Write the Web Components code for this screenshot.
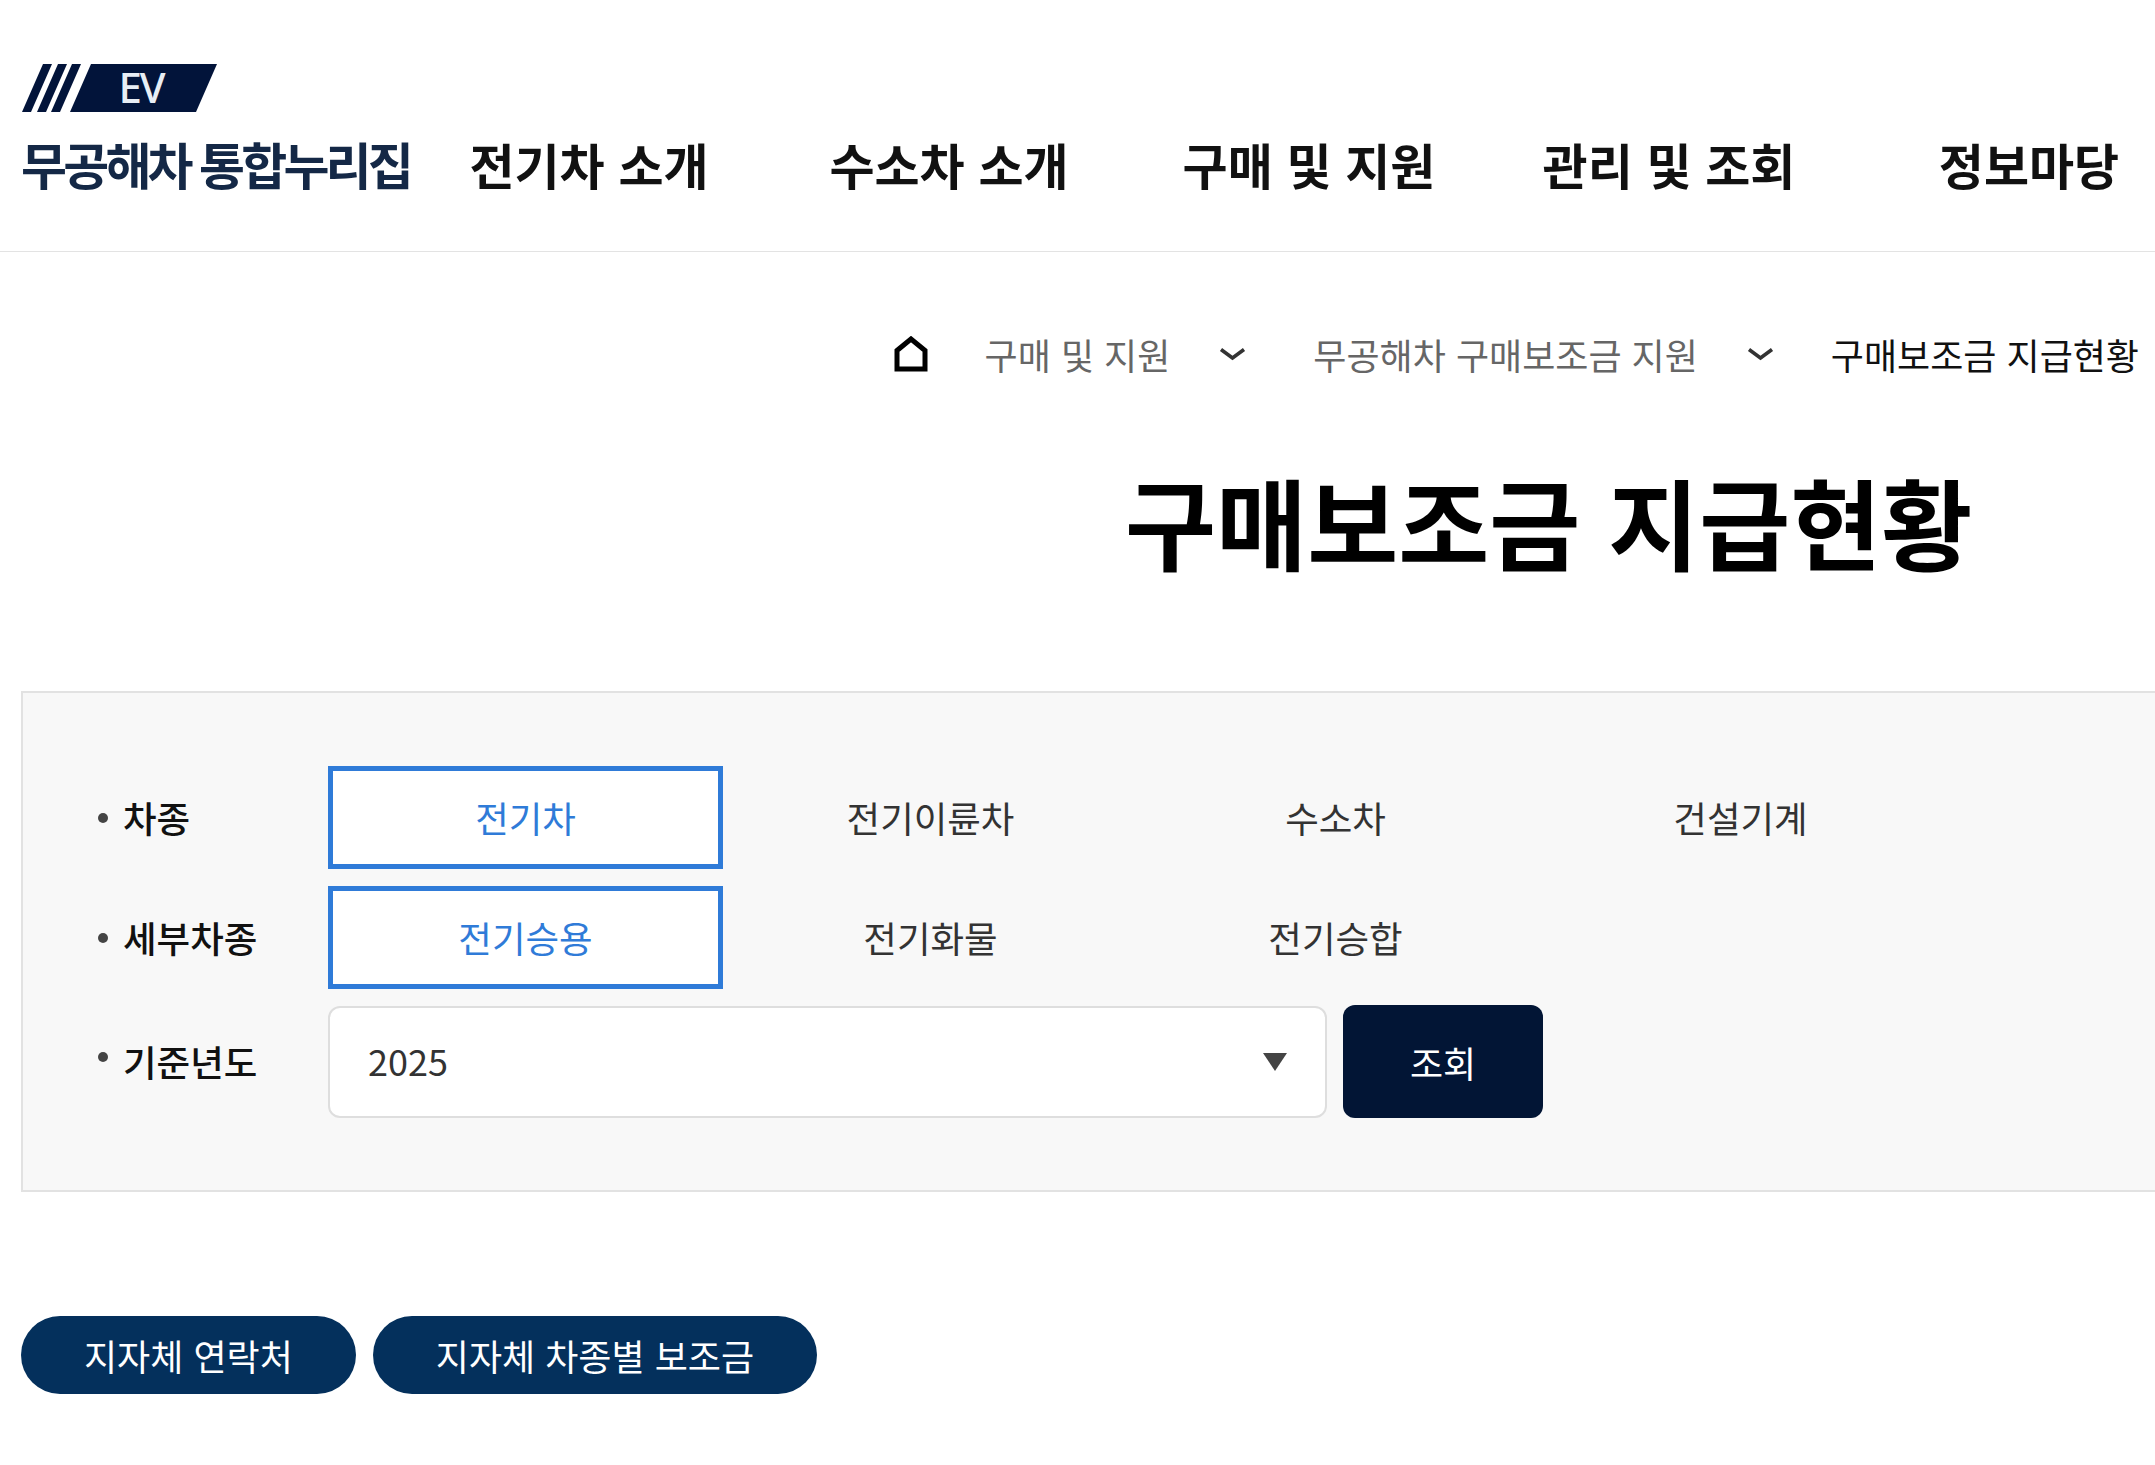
<!DOCTYPE html>
<html lang="ko"><head><meta charset="utf-8"><title>구매보조금 지급현황</title>
<style>
html,body{margin:0;background:#fff;overflow-x:hidden}
body{font-family:"Noto Sans CJK KR","Noto Sans",sans-serif;width:2155px;color:#111}
</style></head><body>
<ev-header></ev-header>
<ev-crumbs></ev-crumbs>
<ev-title>구매보조금 지급현황</ev-title>
<ev-panel></ev-panel>
<ev-actions></ev-actions>
<script>
function def(name,html){customElements.define(name,class extends HTMLElement{constructor(){super();this.attachShadow({mode:'open'}).innerHTML=html;}});}
def('ev-logo',`<style>
:host{display:block;width:388px;margin-left:21px;padding-top:64px}
.mark{position:relative;width:200px;height:48px}
svg{display:block;position:absolute;left:0;top:0}
.ev{position:absolute;left:97px;top:0;width:46px;text-align:center;font:500 42px/46px "Noto Sans",sans-serif;letter-spacing:-2px;color:#e8eef5}
.t{font-size:50px;font-weight:700;color:#142846;letter-spacing:-3.800px;white-space:nowrap;word-spacing:-1px;margin-top:21px;line-height:60px}
</style>
<div class="mark"><svg width="200" height="48" viewBox="20 64 200 48">
<path fill="#02143a" d="M21 112h9l21-48h-9zM36 112h9l21-48h-9zM50 112h9l21-48h-9zM69 112h126l21-48H90z"/>
</svg><span class="ev">EV</span></div><div class="t">무공해차 통합누리집</div>`);
def('ev-nav',`<style>
:host{display:grid;grid-template-columns:repeat(5,360px);padding-top:129px;align-self:flex-start}
a{display:block;text-align:center;font-size:49px;line-height:70px;font-weight:700;color:#111;white-space:nowrap}
</style><a>전기차 소개</a><a>수소차 소개</a><a>구매 및 지원</a><a>관리 및 조회</a><a>정보마당</a>`);
def('ev-header',`<style>
:host{display:flex;height:251px;border-bottom:1px solid #e3e3e3;overflow:hidden}
</style><ev-logo></ev-logo><ev-nav></ev-nav>`);
def('ev-crumbs',`<style>
:host{display:flex;justify-content:flex-end;align-items:center;height:60px;padding:72px 16px 0 0;font-size:36px;color:#666;white-space:nowrap}
svg{display:block;flex:none}
.cur{color:#111}
</style>
<svg width="34" height="36" viewBox="0 0 34 36"><path d="M3 14.500 17 3l14 11.500V33H3z" fill="none" stroke="#000" stroke-width="5"/></svg>
<span style="margin-left:57px">구매 및 지원</span>
<svg style="margin-left:49px" width="27" height="14" viewBox="0 0 27 14"><path d="M2 2.500 13.500 11 25 2.500" fill="none" stroke="#333" stroke-width="3.600"/></svg>
<span style="margin-left:67px">무공해차 구매보조금 지원</span>
<svg style="margin-left:49px" width="27" height="14" viewBox="0 0 27 14"><path d="M2 2.500 13.500 11 25 2.500" fill="none" stroke="#333" stroke-width="3.600"/></svg>
<span class="cur" style="margin-left:57px">구매보조금 지급현황</span>`);
def('ev-title',`<style>
:host{display:block;margin-top:76px;padding-left:1125px;height:120px;font-size:99px;line-height:120px;font-weight:700;color:#000;white-space:nowrap}
</style><slot></slot>`);
def('ev-tab',`<style>
:host{display:flex;align-items:center;justify-content:center;box-sizing:border-box;width:395px;height:103px;font-size:36.500px;color:#333;white-space:nowrap}
:host([on]){background:#fff;border:5px solid #2f7bd8;color:#2f7bd8}
</style><slot></slot>`);
def('ev-label',`<style>
:host{display:flex;align-items:center;gap:15px;width:230px;font-size:36.500px;font-weight:500;color:#111;white-space:nowrap}
i{width:10px;height:10px;border-radius:50%;background:#444;flex:none}
:host([high]) i{margin-bottom:9px}
</style><i></i><slot></slot>`);
def('ev-select',`<style>
:host{display:flex;align-items:center;justify-content:space-between;box-sizing:border-box;width:999px;height:112px;padding:0 38px 0 38px;background:#fff;border:2px solid #dedede;border-radius:12px;font-size:36px;color:#333}
svg{display:block}
span{display:block;margin-bottom:3px}
</style><span><slot></slot></span><svg width="24" height="18" viewBox="0 0 24 18"><path d="M0 0h24L12 18z" fill="#444"/></svg>`);
def('ev-panel',`<style>
:host{display:block;box-sizing:border-box;margin:111px 0 0 21px;height:501px;padding:73px 0 0 75px;background:#f8f8f8;border:2px solid #e2e2e2;border-right:none}
.r{display:flex;align-items:center}
.tabs{display:flex;gap:10px}
.r+.r{margin-top:17px}
.r+.r+.r{margin-top:16px}
.btn{display:flex;align-items:center;justify-content:center;width:200px;height:113px;margin-left:16px;border-radius:12px;background:#021535;color:#fff;font-size:36px}
</style>
<div class="r"><ev-label>차종</ev-label><div class="tabs"><ev-tab on>전기차</ev-tab><ev-tab>전기이륜차</ev-tab><ev-tab>수소차</ev-tab><ev-tab>건설기계</ev-tab></div></div>
<div class="r"><ev-label>세부차종</ev-label><div class="tabs"><ev-tab on>전기승용</ev-tab><ev-tab>전기화물</ev-tab><ev-tab>전기승합</ev-tab></div></div>
<div class="r"><ev-label high>기준년도</ev-label><ev-select>2025</ev-select><div class="btn">조회</div></div>`);
def('ev-pill',`<style>
:host{display:flex;align-items:center;height:78px;padding:0 63px;border-radius:39px;background:#04305c;color:#fff;font-size:36px;white-space:nowrap}
</style><slot></slot>`);
def('ev-actions',`<style>
:host{display:flex;gap:17px;margin:124px 0 71px 21px}
</style><ev-pill>지자체 연락처</ev-pill><ev-pill>지자체 차종별 보조금</ev-pill>`);
</script>
</body></html>
